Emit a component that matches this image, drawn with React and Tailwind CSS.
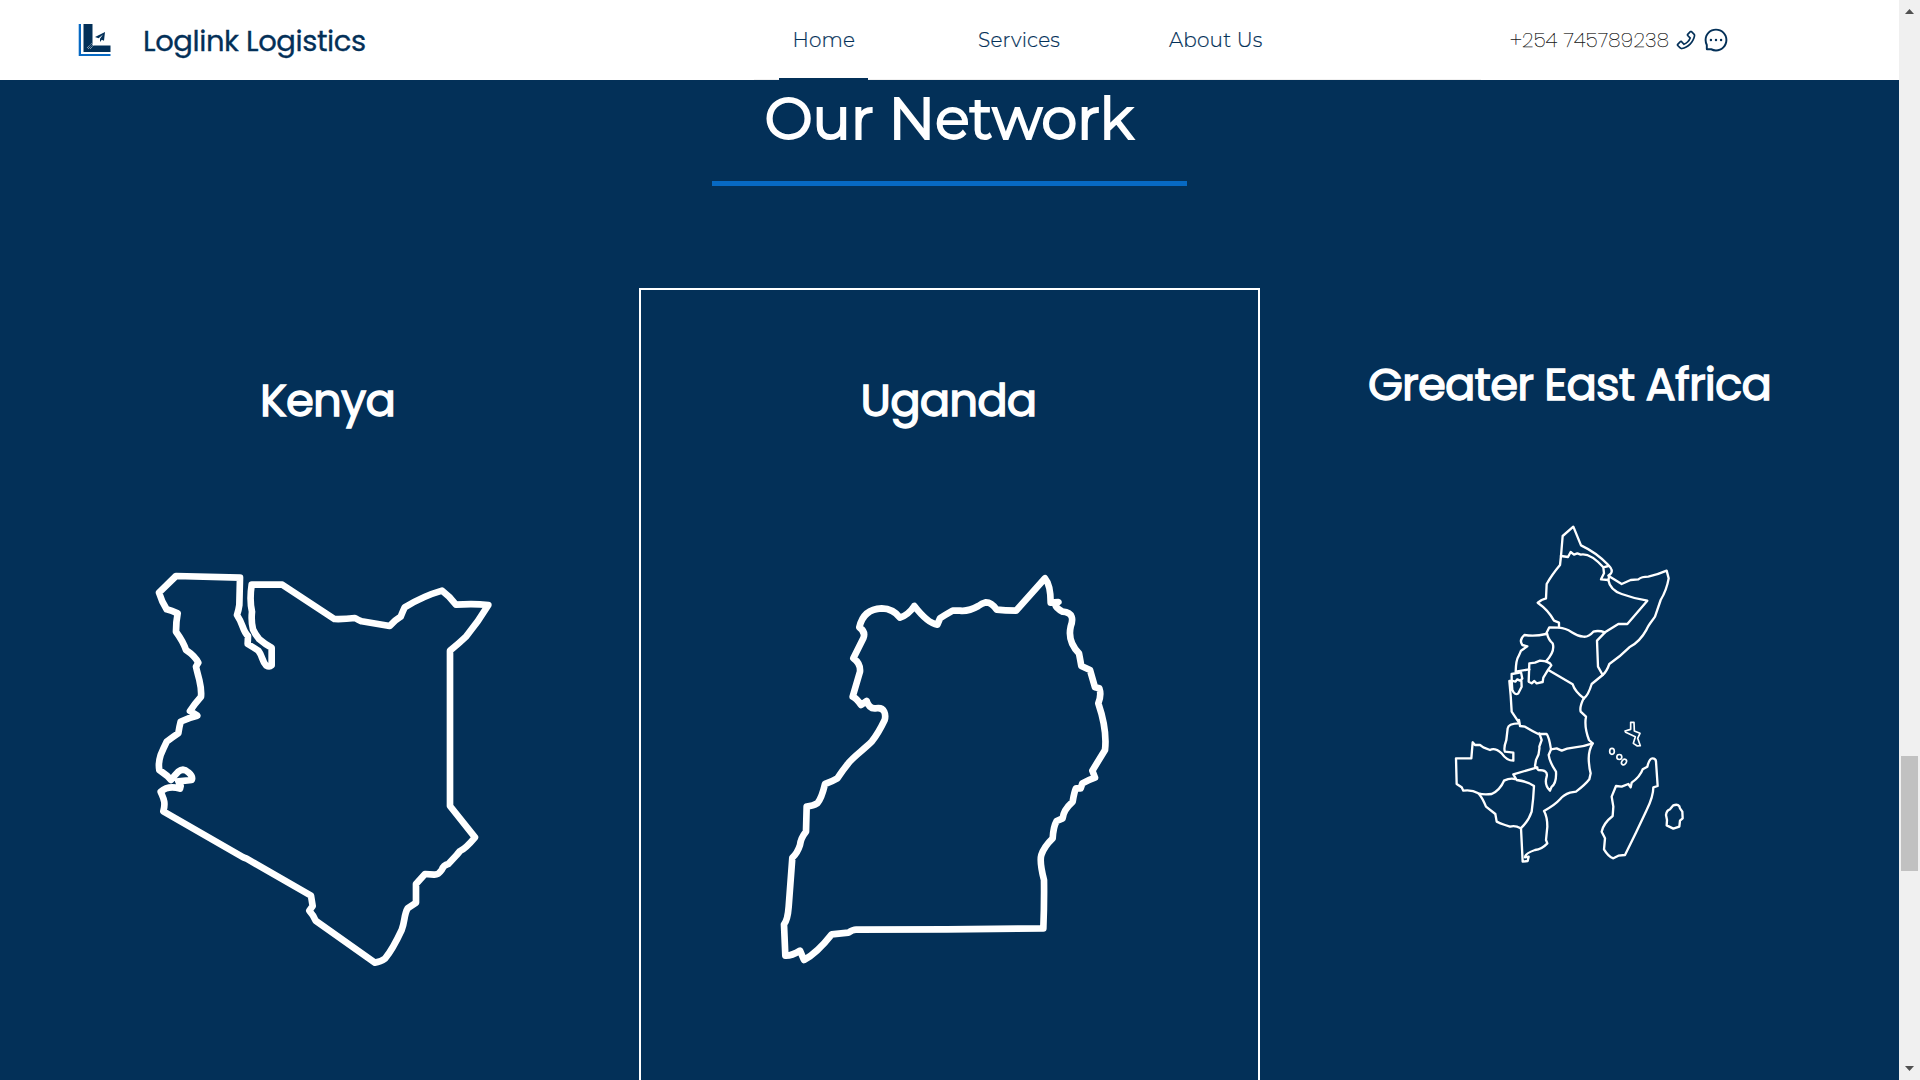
import React from "react";
import { AiOutlineMessage, AiOutlinePhone } from "react-icons/ai";

const KENYA =
  "M108,78 L300,83 L298,165 Q296,180 291,195 Q302,212 308,230 Q315,250 324,258 L323,282 Q340,292 355,302 C368,318 366,335 378,346 Q388,352 395,346 L395,293 Q375,283 358,268 Q345,252 339,238 Q333,215 336,185 Q328,150 335,104 L427,104 L583,207 Q612,208 645,204 Q655,210 665,214 L749,228 Q765,210 782,200 Q788,185 794,172 Q850,138 906,122 Q930,140 948,164 Q1000,160 1045,165 Q1015,215 978,260 Q955,282 930,302 L930,768 L1005,862 C990,880 975,897 960,903 L950,915 L925,942 Q910,945 905,960 Q895,975 882,974 L855,972 L828,1002 L828,1058 L803,1075 C792,1092 795,1115 785,1140 Q758,1198 735,1226 Q722,1236 705,1238 L527,1112 Q520,1095 508,1082 L518,1068 L513,1037 L320,926 L310,922 L70,784 C78,755 70,745 62,725 Q85,705 120,716 L122,708 L115,694 Q135,692 155,690 Q160,680 145,667 Q130,653 115,665 Q105,675 93,690 L82,678 L58,660 Q54,640 62,615 Q70,595 80,575 Q100,560 115,550 Q118,530 122,515 Q145,503 172,497 L150,483 Q165,460 183,440 Q185,420 178,390 Q170,360 168,350 L175,338 Q165,318 138,300 Q130,275 108,245 Q108,215 113,190 Q95,182 80,178 Q65,155 57,128 Z";

const UGANDA =
  "M855,55 L768,152 Q735,152 710,149 Q695,127 678,127 Q665,130 655,138 Q625,155 600,152 L578,152 Q555,165 540,175 L532,194 C505,190 480,160 463,138 Q445,165 420,173 Q400,146 365,145 Q310,147 298,202 Q318,215 310,235 L280,295 Q302,310 300,335 L278,410 Q290,415 303,435 L320,423 Q328,448 348,445 C375,440 378,465 374,480 Q355,520 335,545 C310,570 280,590 265,610 Q250,628 232,655 Q215,665 195,672 Q185,715 172,730 Q160,738 140,740 L138,815 Q122,835 120,855 Q112,880 97,893 Q92,960 86,1040 Q83,1080 72,1093 L76,1187 Q95,1188 120,1172 L132,1200 C165,1182 190,1155 215,1123 L265,1118 Q280,1108 290,1109 L560,1108 L850,1105 Q853,1030 852,960 Q838,905 844,885 Q852,860 878,835 Q880,800 890,783 L908,775 Q910,750 938,725 Q943,695 948,685 L962,685 L967,670 Q985,660 1005,653 L997,632 L1035,570 Q1042,510 1015,430 Q1025,405 1018,385 L1005,382 L990,330 L964,318 Q960,295 957,280 Q922,245 932,200 C940,178 940,158 908,155 Q888,145 885,132 L895,126 L872,128 Q872,75 855,55 Z";

const EAST_AFRICA = [
  "M363,138 L368,78 L400,50 L423,106 Q470,128 505,165 Q520,180 513,190 L505,197 L545,222 L572,210 L595,208 Q605,200 625,200 Q650,195 680,182 L686,205 Q680,240 662,270 L645,320 C635,335 625,345 620,358 Q600,395 568,412 Q540,440 508,462 Q500,485 488,495 L455,522 Q445,555 432,565",
  "M363,138 L384,141 L392,126 L402,134 L412,130 L422,134 Q450,128 490,172 L505,168 M490,172 L492,190 L483,208 L505,210 L508,198",
  "M363,138 L360,165 Q335,195 320,222 L318,265 L305,270 L293,278 Q325,300 342,332 L357,338 L357,352",
  "M505,210 Q510,240 545,252 Q580,265 622,272 L562,342 L535,342 L495,367 Q475,360 460,365 Q445,382 430,380 C395,378 395,355 357,353 L328,352 L318,372",
  "M495,367 L471,392 L474,470 L488,495 M432,565 Q405,545 398,523 L325,480",
  "M318,372 Q285,380 253,375 Q236,390 247,405 L262,409 L243,422 Q240,430 235,440 Q228,450 227,485 L268,478 M321,370 Q325,390 338,400 Q346,425 318,454",
  "M318,454 L300,452 L285,458 L268,460 L266,515 L275,520 L283,513 L290,520 L308,516 L310,503 L325,478 L334,466 L330,460 Z",
  "M215,492 L243,487 L247,506 L240,512 L232,508 L226,515 L215,512 Z M208,513 L215,512 L217,540 Q225,558 235,550 L245,530 L244,510 M208,513 Q213,560 215,605 L237,638",
  "M237,640 Q205,640 203,655 L199,690 Q190,715 195,725 L220,728 L220,752 Q200,752 185,730 Q165,712 150,720 L130,712 L120,705 L105,705 L98,697 L94,745 L48,745 L50,822 L65,832 L70,842 Q95,838 115,850 Q130,855 155,852 Q180,840 192,812 Q210,803 225,807",
  "M237,630 L240,648 L255,650 Q275,662 295,672 L320,672 Q327,680 333,718 L350,715 L365,722 Q380,715 400,713 Q430,710 458,700",
  "M432,563 Q418,590 422,605 L438,620 Q432,650 447,690 L458,700 Q443,725 447,760 Q448,775 452,790 L448,808 Q435,825 408,845 L390,848 Q370,855 360,868 Q345,885 312,903 Q322,920 322,950 L318,990 L322,1000 Q305,1018 285,1020 Q255,1030 255,1042 L266,1040 L263,1053 L248,1055 L243,955",
  "M298,670 L305,690 L298,710 Q300,730 288,750 L285,768 L295,780 Q325,780 320,800 Q312,825 330,842 L335,830 Q350,820 348,785 Q328,755 326,735 L333,718",
  "M292,772 L220,793 L230,810 Q265,815 282,828 Q280,870 275,905 Q265,935 242,955 Q225,945 210,950 L195,945 Q180,940 170,935 L166,912 L138,890 Q128,865 117,852",
];

const SEYCHELLES = "M572,637 L582,637 L583,663 L600,670 L593,685 L601,707 L592,708 L580,700 L586,680 L557,667 L555,663 L572,658 Z";
const MADAGASCAR =
  "M637,745 Q648,745 648,755 L653,828 L640,832 Q640,860 620,900 Q590,965 555,1035 L535,1037 L520,1045 Q505,1040 492,1018 L495,985 L485,965 Q490,940 518,918 L520,890 L515,860 L528,828 L545,830 L565,822 L572,832 L575,818 Q600,800 608,778 L622,770 Q628,745 637,745 Z";
const MAURITIUS = "M700,886 Q718,880 720,895 L727,905 L728,925 L720,932 L718,950 L700,956 L680,946 L681,930 L678,915 Q680,900 690,898 Z";

function CountryMap({ d, className }) {
  return (
    <svg viewBox="0 0 1110 1290" className={`${className} h-[430px] w-[370px] shrink-0`} fill="none" stroke="white" strokeWidth="20" strokeLinejoin="round" strokeLinecap="round">
      <path d={d} />
    </svg>
  );
}

function RegionMap() {
  return (
    <svg viewBox="0 0 780 1110" className="ml-[180px] mt-[95px] h-[370px] w-[260px] shrink-0" fill="none" stroke="white" strokeWidth="7" strokeLinejoin="round" strokeLinecap="round">
      {EAST_AFRICA.map((d) => (
        <path key={d} d={d} />
      ))}
      <g strokeWidth="5">
        <path d={SEYCHELLES} />
        <ellipse cx="516" cy="724" rx="7" ry="9" />
        <circle cx="538" cy="741" r="7.5" />
        <ellipse cx="552" cy="756" rx="6.5" ry="9" transform="rotate(35 552 756)" />
      </g>
      <path d={MADAGASCAR} />
      <path d={MAURITIUS} />
    </svg>
  );
}

function Logo() {
  return (
    <svg viewBox="0 0 34 34" className="ml-[78px] h-[34px] w-[34px] shrink-0">
      <path d="M0 1h1v32H0z" fill="#b5d3ee" />
      <path d="M1 1h2v30h29.5v2H1z" fill="#0769c3" />
      <path d="M5.500 1h9v21.500h18V29H5.500z" fill="#033058" />
      <path d="M10 26l6-6M12 26l5-5M9 25l5-5" stroke="white" strokeWidth="0.7" strokeDasharray="1 0.8" />
      <path d="M27 9L17 14l3.600 1.200L25 11.500l-3 4.300v3.200l1.800-2.200 2.200 1z" fill="#033058" />
    </svg>
  );
}

const poppins = "font-['Poppins','Inter',sans-serif]";
const montserrat = "font-['Montserrat','Open_Sans',sans-serif]";

function Title({ children }) {
  return (
    <h2 className={`${poppins} mr-[2px] text-center text-[45px] font-normal leading-[60px] tracking-[-0.85px] whitespace-nowrap text-white [-webkit-text-stroke:1.3px_white]`}>
      {children}
    </h2>
  );
}

export default function App() {
  return (
    <div className="flex h-screen overflow-hidden bg-[#033058]">
      <div className="flex w-[1899px] flex-col overflow-hidden">
        <header className="flex h-20 shrink-0 items-center bg-white text-[#033058]">
          <Logo />
          <span className={`${poppins} ml-[31px] w-[611px] whitespace-nowrap pt-px text-[29px] leading-9 tracking-[-0.4px] [-webkit-text-stroke:0.3px_#033058]`}>Loglink Logistics</span>
          <nav className={`${montserrat} mr-[30px] flex h-20 w-[727px] border-b border-[#f0f0f0] pl-[25px] text-[20px] font-light leading-[80px] tracking-[0.2px] whitespace-nowrap [-webkit-text-stroke:0.2px_#033058]`}>
            <a className="h-20 w-[89px] border-b-2 border-[#033058] pl-[13.5px]">Home</a>
            <a className="ml-[110px] w-[88px]">Services</a>
            <a className="ml-[103px]">About Us</a>
          </nav>
          <div className="-ml-px flex items-center">
            <span className={`${poppins} w-[164px] whitespace-nowrap text-[20px] font-extralight tracking-[0.3px] text-[#111] [-webkit-text-stroke:0.25px_#111]`}>+254 745789238</span>
            <AiOutlinePhone className="h-6 w-6" />
            <AiOutlineMessage className="ml-[5px] h-[26px] w-[26px]" />
          </div>
        </header>
        <main className="flex flex-1 flex-col items-center">
          <h1 className={`${montserrat} h-[101px] pr-px text-[57.5px] font-normal leading-[77px] tracking-[-0.25px] text-white [-webkit-text-stroke:1.9px_white]`}>Our Network</h1>
          <div className="h-[5px] w-[475px] shrink-0 bg-[#0769c3]" />
          <div className="mt-[102px] grid h-[900px] w-[1863px] shrink-0 grid-cols-3">
            <section className="flex flex-col pt-[83px]">
              <Title>Kenya</Title>
              <CountryMap d={KENYA} className="ml-[122px] mt-[119px]" />
            </section>
            <section className="flex flex-col border-2 border-white pt-[81px]">
              <Title>Uganda</Title>
              <CountryMap d={UGANDA} className="ml-[119px] mt-[129px]" />
            </section>
            <section className="flex flex-col pt-[67px]">
              <Title>Greater East Africa</Title>
              <RegionMap />
            </section>
          </div>
        </main>
      </div>
      <div className="flex w-[21px] flex-col items-center bg-[#f0f0f0]">
        <svg viewBox="0 0 9 5" className="mt-[9px] h-[5px] w-[9px]" fill="#505050"><path d="M0 5L4.500 0L9 5z" /></svg>
        <div className="mt-[742px] h-[115px] w-[17px] bg-[#c1c1c1]" />
        <svg viewBox="0 0 9 5" className="mt-[195px] h-[5px] w-[9px]" fill="#505050"><path d="M0 0h9L4.500 5z" /></svg>
      </div>
    </div>
  );
}
